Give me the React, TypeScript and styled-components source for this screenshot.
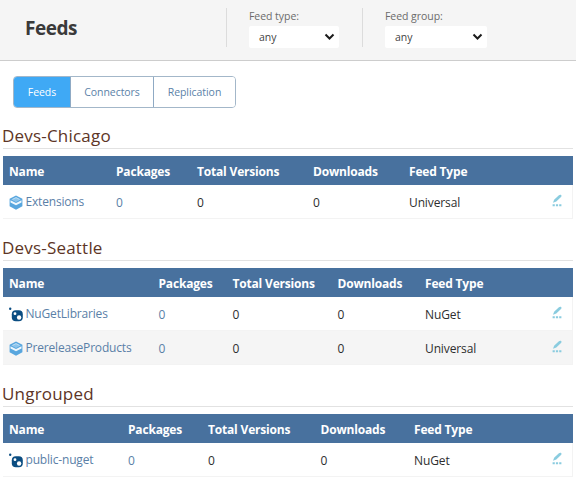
import React from "react";
import styled, { createGlobalStyle } from "styled-components";

const GlobalStyle = createGlobalStyle`
  * { box-sizing: border-box; }
  body {
    margin: 0;
    background: #fff;
    font-family: "Open Sans", "Noto Sans", sans-serif;
    font-size: 12px;
    color: #333;
    overflow: hidden;
  }
`;

const Page = styled.div`
  width: 576px;
  height: 480px;
  overflow: hidden;
`;

const Header = styled.header`
  display: flex;
  height: 61px;
  background: #f5f5f5;
  border-bottom: 1px solid #cdcdcd;
`;

const Title = styled.h1`
  margin: 0;
  width: 226px;
  padding: 14px 0 0 25px;
  font-size: 19px;
  line-height: 28px;
  font-weight: 700;
  letter-spacing: -0.45px;
  color: #3a3a3a;
`;

const Filter = styled.div<{ $width: number }>`
  width: ${(p) => p.$width}px;
  height: 39px;
  margin-top: 8px;
  padding-left: 22px;
  border-left: 1px solid #dcdcdc;
`;

const FilterLabel = styled.label`
  display: block;
  height: 18px;
  line-height: 16px;
  font-size: 10.5px;
  letter-spacing: -0.05px;
  color: #6b6b6b;
  white-space: nowrap;
`;

const Select = styled.button<{ $width: number }>`
  display: flex;
  align-items: center;
  justify-content: space-between;
  width: ${(p) => p.$width}px;
  height: 22px;
  padding: 0 4px 0 10px;
  border: 0;
  border-radius: 2px;
  background: #fff;
  color: #444;
  font: inherit;
  font-size: 10.5px;
  line-height: 22px;
`;

const Tabs = styled.nav`
  display: flex;
  width: 223px;
  height: 32px;
  margin: 15px 0 0 13px;
  border: 1px solid #a3b7c9;
  border-radius: 4px;
  overflow: hidden;
`;

const Tab = styled.a<{ $width: number; $active?: boolean }>`
  width: ${(p) => p.$width}px;
  line-height: 30px;
  text-align: center;
  font-size: 10.5px;
  letter-spacing: -0.05px;
  color: ${(p) => (p.$active ? "#fff" : "#5b82a8")};
  background: ${(p) => (p.$active ? "#3fa9f5" : "#fff")};
  & + & { border-left: 1px solid #8faac4; }
`;

const Group = styled.section<{ $gap: number }>`
  margin: ${(p) => p.$gap}px 3px 0;
`;

const GroupTitle = styled.h2`
  margin: 0 0 7px;
  height: 24px;
  padding: 0;
  text-indent: -1px;
  border-bottom: 1px solid #e2e2e2;
  font-size: 17px;
  line-height: 22px;
  font-weight: 400;
  letter-spacing: 0.2px;
  color: #5d3526;
`;

const Table = styled.div`
  width: 570px;
`;

const Row = styled.div<{ $columns: string; $shaded?: boolean }>`
  display: grid;
  grid-template-columns: ${(p) => p.$columns};
  align-items: start;
  height: 34px;
  padding-left: 6px;
  border: solid #f3f3f3;
  border-width: 0 1px 1px 0;
  background: ${(p) => (p.$shaded ? "#f5f5f5" : "#fff")};
`;

const HeadRow = styled(Row)`
  height: 29px;
  border: 0;
  background: #48719e;
`;

const HeadCell = styled.span`
  padding-top: 1px;
  color: #fff;
  font-size: 12px;
  font-weight: 700;
  line-height: 29px;
  letter-spacing: -0.18px;
  white-space: nowrap;
`;

const Cell = styled.span<{ $link?: boolean }>`
  padding-top: 1px;
  color: ${(p) => (p.$link ? "#5a80a7" : "#2e2e2e")};
  font-size: 12px;
  line-height: 33px;
  letter-spacing: -0.12px;
  white-space: nowrap;
`;

const NameCell = styled(Cell)`
  display: flex;
  align-items: center;
  gap: 2.5px;
  height: 33px;
  padding-top: 0;
  letter-spacing: -0.18px;
  svg { margin-top: 2px; }
`;

const EditLink = styled.a`
  display: flex;
  margin-top: 9px;
`;

const Chevron = () => (
  <svg width="11" height="8" viewBox="0 0 11 8" fill="none">
    <path d="M1.5 1.5 5.5 5.5 9.5 1.5" stroke="#1b1b1b" strokeWidth="2" />
  </svg>
);

const BoxIcon = () => (
  <svg width="14" height="15" viewBox="0 0 14 15">
    <path d="M7 .4 13.4 3.800v7.400L7 14.700.6 11.200V3.800Z" fill="#58a6de" />
    <path d="M7 2 11.800 4.500 7 7 2.200 4.500Z" fill="#8cc4eb" />
    <path d="M1.500 5.200 7 8.100 12.500 5.200v2.200L7 10.300 1.500 7.400Z" fill="#eef7fd" />
    <path d="M3.500 4.400 7 2.700 10.500 4.400" fill="none" stroke="#cfe7f7" strokeWidth=".7" />
  </svg>
);

const NuGetIcon = () => (
  <svg width="14" height="15" viewBox="0 0 14 15" fill="#0b4d82">
    <circle cx="1.2" cy="1.8" r="1.2" />
    <rect x="2.8" y="3.3" width="11" height="11" rx="4" />
    <circle cx="6" cy="6.7" r="1.4" fill="#fff" />
    <circle cx="10.1" cy="10.5" r="2.2" fill="#fff" />
  </svg>
);

const PencilIcon = () => (
  <svg width="11" height="14" viewBox="0 0 11 14" fill="#8accdf">
    <path d="M6.900 1.300c.7-.7 1.600-.8 2.200-.3s.6 1.300-.1 2L4.300 7.500 1 8.800 2.100 5.700Z" />
    <path d="M.6 10.300h2.200v2H.6zM3.900 10.300h2.200v2H3.900zM7.200 10.300h2.200v2H7.200z" />
  </svg>
);

type Feed = { name: string; type: "Universal" | "NuGet" };
type FeedGroup = { title: string; gap: number; columns: string; feeds: Feed[] };

const groups: FeedGroup[] = [
  {
    title: "Devs-Chicago",
    gap: 17,
    columns: "107px 81px 116px 96px 143px 1fr",
    feeds: [{ name: "Extensions", type: "Universal" }],
  },
  {
    title: "Devs-Seattle",
    gap: 18,
    columns: "149.5px 74px 105px 87.5px 127px 1fr",
    feeds: [
      { name: "NuGetLibraries", type: "NuGet" },
      { name: "PrereleaseProducts", type: "Universal" },
    ],
  },
  {
    title: "Ungrouped",
    gap: 18,
    columns: "119px 80px 112.5px 93.5px 138px 1fr",
    feeds: [{ name: "public-nuget", type: "NuGet" }],
  },
];

const headings = ["Name", "Packages", "Total Versions", "Downloads", "Feed Type"];

export default function App() {
  return (
    <Page>
      <GlobalStyle />
      <Header>
        <Title>Feeds</Title>
        <Filter $width={136}>
          <FilterLabel>Feed type:</FilterLabel>
          <Select $width={90}>any<Chevron /></Select>
        </Filter>
        <Filter $width={136}>
          <FilterLabel>Feed group:</FilterLabel>
          <Select $width={102}>any<Chevron /></Select>
        </Filter>
      </Header>
      <Tabs>
        <Tab $width={56} $active>Feeds</Tab>
        <Tab $width={83}>Connectors</Tab>
        <Tab $width={82}>Replication</Tab>
      </Tabs>
      {groups.map((group) => (
        <Group key={group.title} $gap={group.gap}>
          <GroupTitle>{group.title}</GroupTitle>
          <Table>
            <HeadRow $columns={group.columns}>
              {headings.map((h) => <HeadCell key={h}>{h}</HeadCell>)}
            </HeadRow>
            {group.feeds.map((feed, i) => (
              <Row key={feed.name} $columns={group.columns} $shaded={i % 2 === 1}>
                <NameCell $link>
                  {feed.type === "NuGet" ? <NuGetIcon /> : <BoxIcon />}
                  {feed.name}
                </NameCell>
                <Cell $link>0</Cell>
                <Cell>0</Cell>
                <Cell>0</Cell>
                <Cell>{feed.type}</Cell>
                <EditLink><PencilIcon /></EditLink>
              </Row>
            ))}
          </Table>
        </Group>
      ))}
    </Page>
  );
}
